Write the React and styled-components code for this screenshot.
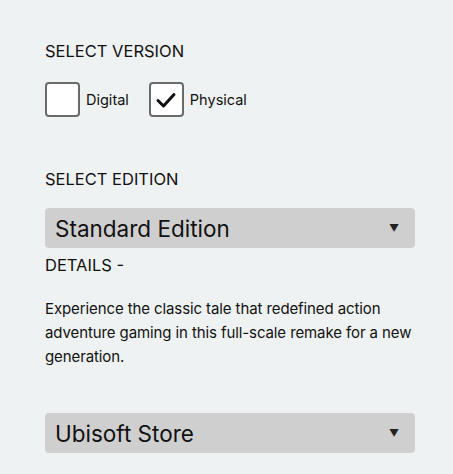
import styled, { createGlobalStyle } from 'styled-components';

const GlobalStyle = createGlobalStyle`
  html, body {
    margin: 0;
    padding: 0;
    background: #eff2f3;
  }
  body {
    font-family: Inter, "Liberation Sans", sans-serif;
    color: #111;
  }
`;

const Page = styled.div`
  width: 453px;
  min-height: 474px;
  box-sizing: border-box;
  padding: 41px 38px 0 45px;
  display: flex;
  flex-direction: column;
`;

const Label = styled.div`
  font-size: 16.5px;
  line-height: 20px;
  text-transform: uppercase;
  margin-top: ${(p) => p.$top || 0}px;
`;

const Options = styled.div`
  display: flex;
  align-items: center;
  gap: 20px;
  margin-top: 21px;
`;

const Option = styled.label`
  display: flex;
  align-items: center;
  gap: 6px;
  font-size: 14.5px;
`;

const Box = styled.span`
  width: 35px;
  height: 35px;
  box-sizing: border-box;
  border: 2px solid #6a6a6a;
  border-radius: 4px;
  background: #fff;
  display: flex;
  align-items: center;
  justify-content: center;
`;

const Select = styled.div`
  height: 40px;
  box-sizing: border-box;
  background: #cfcfcf;
  border-radius: 4px;
  display: flex;
  align-items: center;
  justify-content: space-between;
  padding: 0 16px 0 10px;
  font-size: 22.5px;
  margin-top: ${(p) => p.$top || 0}px;
`;

const Arrow = styled.span`
  font-size: 10px;
  color: #222;
`;

const Details = styled.p`
  margin: 22px -10px 0 0;
  font-size: 15px;
  line-height: 24px;
  letter-spacing: -0.1px;
`;

const Check = () => (
  <svg width="22" height="22" viewBox="0 0 22 22">
    <path d="M3 11.5 L8.5 17 L19 5.5" fill="none" stroke="#111" strokeWidth="3" strokeLinecap="round" strokeLinejoin="round" />
  </svg>
);

export default function App() {
  return (
    <Page>
      <GlobalStyle />
      <Label>Select Version</Label>
      <Options>
        <Option>
          <Box />
          Digital
        </Option>
        <Option>
          <Box>
            <Check />
          </Box>
          Physical
        </Option>
      </Options>
      <Label $top={52}>Select Edition</Label>
      <Select $top={19}>
        Standard Edition
        <Arrow>▼</Arrow>
      </Select>
      <Label $top={7}>Details -</Label>
      <Details>
        Experience the classic tale that redefined action adventure gaming in this full-scale remake for a new generation.
      </Details>
      <Select $top={44}>
        Ubisoft Store
        <Arrow>▼</Arrow>
      </Select>
    </Page>
  );
}
